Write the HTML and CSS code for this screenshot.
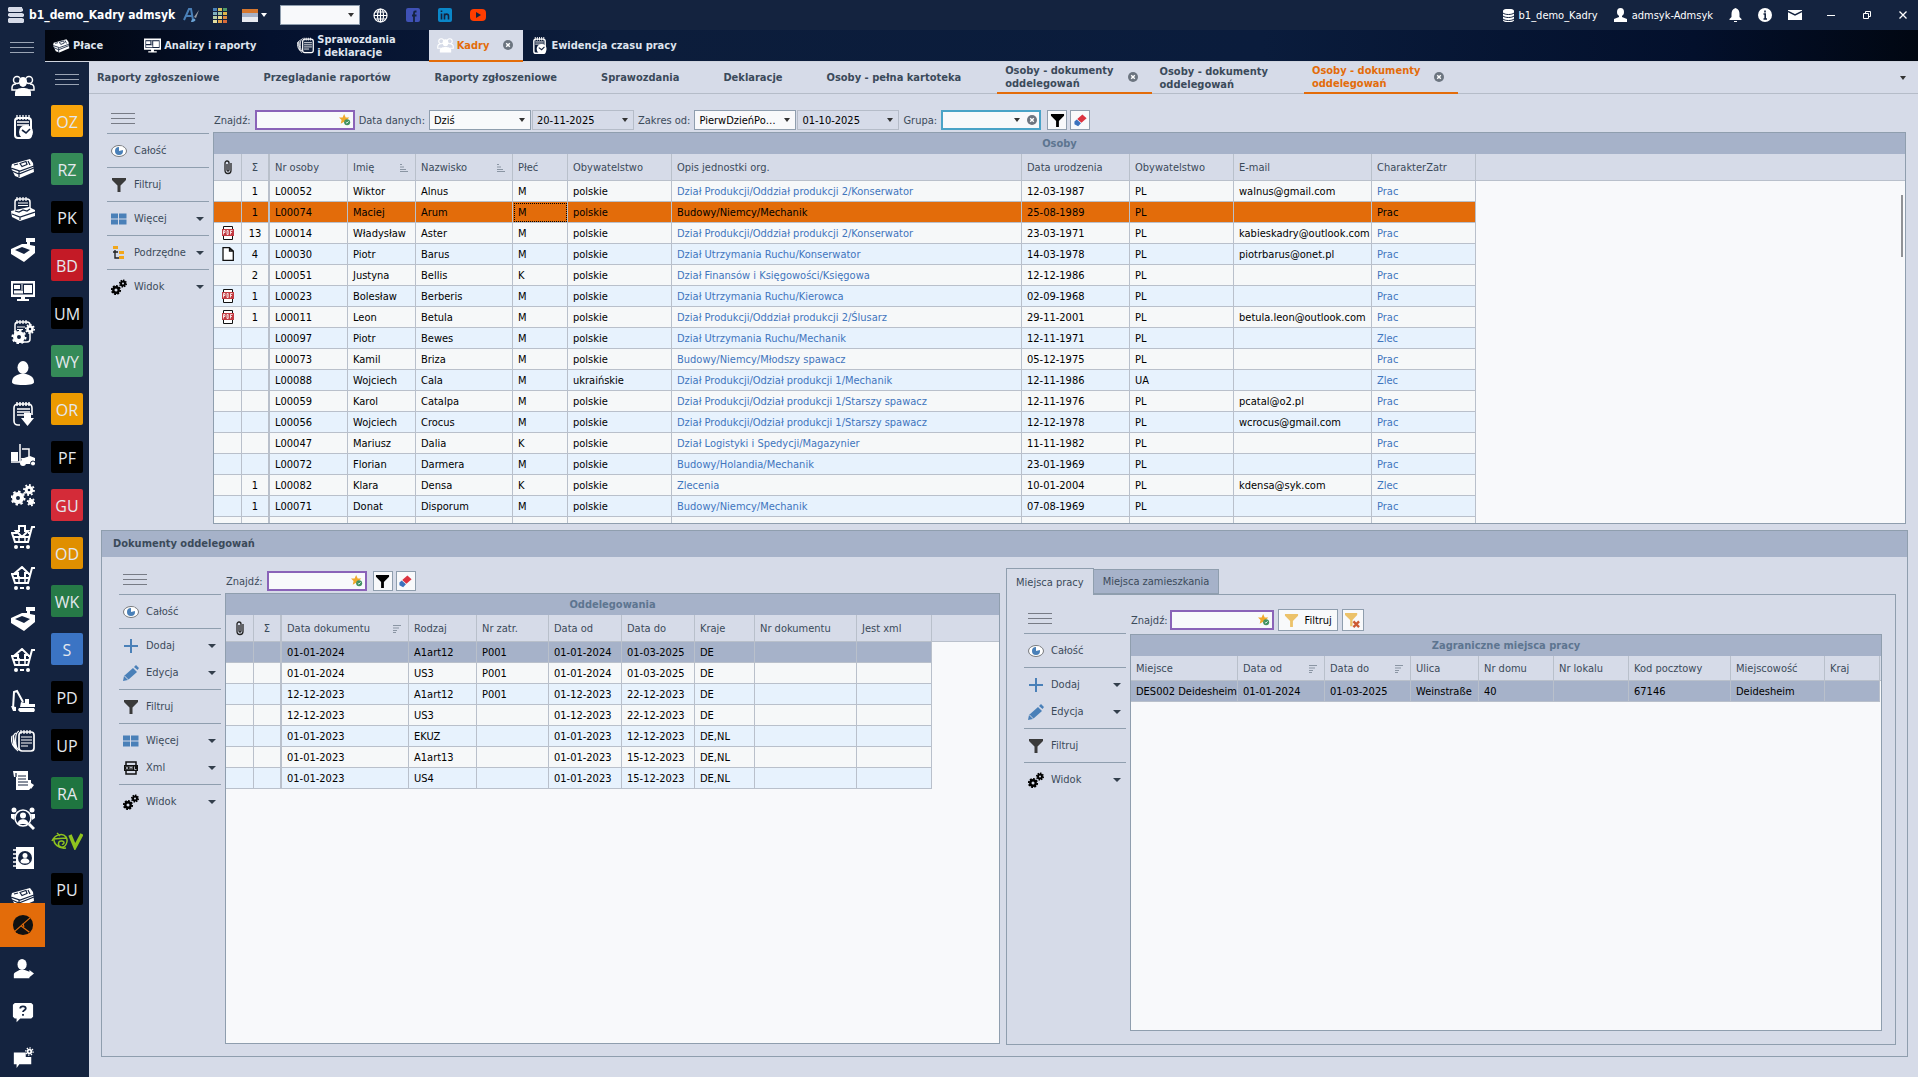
FILE: index.html
```
<!DOCTYPE html>
<html lang="pl">
<head>
	<meta charset="utf-8">
	<title>b1_demo_Kadry admsyk</title>
	<link rel="stylesheet" href="styles.css">
</head>
<body>

<!-- icons used more than once -->
<svg class="defs" width="0" height="0">
	<symbol id="i-money" viewBox="0 0 24 24"><path d="M1 8 19 3l3 4 1 9-14 6-5-2-4-8z" fill="#fff"/><path d="M3 9l4-1M9 7.500l2 3 5-2-1-3zM17 5l2 4M0 12l9 3 14-5M8 15v6M1 15l7 3 15-6" fill="none" stroke="#14233f" stroke-width="1.200"/></symbol>
	<symbol id="i-tray" viewBox="0 0 24 24"><path d="M15 0h9v4h-5v3l5 1v7L13 24 0 16v-5l11-5h5V4h-1z" fill="#fff"/><path d="M4 12l7-3 8 3-6 4z" fill="#14233f"/></symbol>
	<symbol id="i-cart-up" viewBox="0 0 24 24"><g fill="none" stroke="#fff" stroke-width="2"><path d="M24 2h-3l-4 15H4L1 8h5M17 8h3M3 12h16"/><path d="M7 12V7H4l7-6 6 6h-3v5z" fill="#14233f"/><path d="M8 10v6M14 10v6" stroke-width="1.500"/></g><g fill="#fff"><circle cx="5" cy="22" r="2"/><circle cx="17" cy="22" r="2"/><path d="M9 21h4v2H9z"/></g></symbol>
	<symbol id="i-eye" viewBox="0 0 16 16"><ellipse cx="8" cy="8" rx="7.500" ry="5.500" fill="#fff" stroke="#77797c"/><circle cx="8" cy="8" r="4" fill="#4a80b8"/><path d="M8 8V3.500h4V7z" fill="#fff"/></symbol>
	<symbol id="i-funnel" viewBox="0 0 16 16"><path d="M1 1h14v2l-5.500 5.500V15h-3V8.500L1 3z"/></symbol>
	<symbol id="i-more" viewBox="0 0 16 16"><path d="M0 2.500h7v5H0zM8 2.500h7.500v5H8zM0 8.500h7v5H0zM8 8.500h7.500v5H8z" fill="#4a80b8"/></symbol>
	<symbol id="i-tree" viewBox="0 0 16 16"><path d="M4 5v8h4M2 7h5" fill="none" stroke="#222" stroke-width="1.400"/><path d="M2 1h5v3H2zM8 6h5v3H8zM8 11h5v3H8z" fill="#f2a71b"/></symbol>
	<symbol id="i-cogs" viewBox="0 0 16 16"><g fill="none" stroke="#000"><circle cx="5" cy="11" r="2.700" stroke-width="2.400"/><circle cx="5" cy="11" r="4.200" stroke-width="1.800" pathLength="16" stroke-dasharray="1.200 .8"/><circle cx="12" cy="4.500" r="2" stroke-width="2"/><circle cx="12" cy="4.500" r="3.300" stroke-width="1.500" pathLength="16" stroke-dasharray="1.200 .8"/></g></symbol>
	<symbol id="i-plus" viewBox="0 0 16 16"><path d="M8 1v14M1 8h14" stroke="#4a80b8" stroke-width="2"/></symbol>
	<symbol id="i-pencil" viewBox="0 0 16 16"><path d="M0 16l1-5 9-8 4 4-9 8zM11 2l2-2 3 3-1.500 2z" fill="#4a80b8"/><path d="M1.500 11l4 4" stroke="#d6dbe8"/></symbol>
	<symbol id="i-xml" viewBox="0 0 16 16"><path d="M3 5V2h10v3M3 11v3h10v-3" fill="none" stroke="#111" stroke-width="1.500"/><path d="M1 5h14v6H1z" fill="#111"/><path d="M3 6.500l2 3M5 6.500l-2 3M7 9.500v-3l1 1.500 1-1.500v3M11.500 6.500v3h2" stroke="#cfd3dc" stroke-width=".8" fill="none"/></symbol>
	<symbol id="i-star" viewBox="0 0 14 14"><path d="M6 0l1.800 4H12L9 7l1 4.500L6 9l-4 2.500L3 7 0 4h4.200z" fill="#f0a92b"/><circle cx="9.500" cy="9.500" r="3.500" fill="#3f9160"/><path d="M8 9.500l1.200 1.200 2-2.200" fill="none" stroke="#fff"/></symbol>
	<symbol id="i-eraser" viewBox="0 0 16 16"><path d="M10 1.500l4.500 4-5.500 5-4.500-4z" fill="#dc3340"/><path d="M4 7l4.500 4L5.500 14 1.500 12V9z" fill="#3b72bd"/></symbol>
	<symbol id="i-clip" viewBox="0 0 12 16"><path d="M9 4v7.500a3 3 0 0 1-6 0V4a2 2 0 0 1 4 0v7a1 1 0 0 1-2 0V5" fill="none" stroke="#222" stroke-width="1.300"/></symbol>
	<symbol id="i-pdf" viewBox="0 0 14 16"><path d="M2.500 5V1.500h9V5M2.500 10v4.500h9V10" fill="#fff" stroke="#111"/><path d="M1 4h12v7H1z" fill="#c23a41"/><path d="M2.500 9.500v-4h1.500v2H2.500M6 5.500v4h1.200V5.500zM9.500 9.500v-4h2M9.500 7.500H11" fill="none" stroke="#fff" stroke-width=".8"/></symbol>
	<symbol id="i-doc" viewBox="0 0 14 16"><path d="M2 1.700h6.500L12.300 5v9.300H2zM8.500 1.700V5h3.800" fill="#fff" stroke="#111" stroke-width="1.300"/></symbol>
	<symbol id="i-asc" viewBox="0 0 8 8"><path d="M0 .5h2M0 3h4M0 5.500h6M0 7.500h8" stroke="#8a95a3"/></symbol>
	<symbol id="i-desc" viewBox="0 0 8 8"><path d="M0 .5h8M0 3h6M0 5.500h4M0 7.500h3" stroke="#8a95a3"/></symbol>
	<symbol id="i-close" viewBox="0 0 10 10"><circle cx="5" cy="5" r="5" fill="#6c7580"/><path d="M3.200 3.200l3.600 3.600M6.800 3.200L3.200 6.800" stroke="#fff" stroke-width="1.400"/></symbol>
	<symbol id="i-people" viewBox="0 0 24 24"><g fill="none" stroke="#fff" stroke-width="1.500"><circle cx="6" cy="6" r="3.500"/><circle cx="18" cy="6" r="3.500"/><path d="M6 16H1v-2c0-3 2-4 4-4M18 16h5v-2c0-3-2-4-4-4"/></g><ellipse cx="12" cy="8" rx="4" ry="5" fill="#fff"/><path d="M4 22v-3c0-4 4-5 8-5s8 1 8 5v3z" fill="#fff"/></symbol>
	<symbol id="i-screen" viewBox="0 0 24 24"><path d="M0 2h24v16H14v2h4v2H6v-2h4v-2H0z" fill="#fff"/><path d="M2 4.500h20v11H2z" fill="#14233f"/><path d="M3 6h6v4H3zM3 11.500h9v3H3zM13 6h8v8h-8z" fill="#fff"/><path d="M11 5v6" stroke="#fff"/></symbol>
	<symbol id="i-clock" viewBox="0 0 24 24"><rect x="4" y="3" width="16" height="20" rx="3" fill="none" stroke="#fff" stroke-width="2"/><path d="M6 0v5M9 0v5M12 0v5M15 0v5M18 0v5M6 7h12M6 10h12" stroke="#fff" stroke-width="1.300"/><circle cx="15" cy="17" r="7" fill="#fff"/><path d="M11 15l4 3 4-4" fill="none" stroke="#14233f" stroke-width="1.600"/></symbol>
	<symbol id="i-docs" viewBox="0 0 24 24"><rect x="8" y="3" width="15" height="19" rx="3" fill="#14233f" stroke="#fff" stroke-width="1.700"/><path d="M10 8h11M10 11h11M10 14h11M10 17h7M10 1v4M13 1v4M16 1v4M19 1v4M7 22C3 20 4 10 2 6M5 4C1 5 2 17 5 20M8 2C3 4 4 19 8 21M1 7c-1 4 0 9 3 12" fill="none" stroke="#fff" stroke-width="1.200"/></symbol>
	<symbol id="i-user" viewBox="0 0 24 24"><ellipse cx="12" cy="6.500" rx="5.500" ry="6.500" fill="#fff"/><path d="M1 21c0-5 4-7 8-8h6c4 1 8 3 8 8 0 2-3 3-11 3S1 23 1 21z" fill="#fff"/></symbol>
</svg>

<header class="titlebar">
	<svg width="16" height="16" viewBox="0 0 16 16"><path d="M1 0h13v1l1 1v2l-2 1H1L0 4V1zM1 6h13l2 1v2l-1 1H2L0 9V7zM1 11h13l2 1v3l-1 1H1l-1-1v-3z" fill="#d6dbe8"/></svg>
	<h1>b1_demo_Kadry admsyk</h1>
	<div class="tools">
		<button type="button" aria-label="Czcionka"><svg width="16" height="16" viewBox="0 0 16 16"><path d="M1 13L6 2h2l2 11M3 9h6" fill="none" stroke="#4a80b8" stroke-width="2"/><path d="M16 3l-3 8-2-1z" fill="#9a9da3"/><path d="M8 15c0-3 3-4 4-3s0 3-4 3z" fill="#6aa2d4"/></svg></button>
		<button type="button" aria-label="Kafelki"><svg width="15" height="15" viewBox="0 0 15 15"><path d="M0 0h4v3H0z" fill="#4a80b8"/><path d="M5 0h4v3H5z" fill="#d8c35a"/><path d="M10 0h4v3h-4z" fill="#4f9a6a"/><path d="M0 4h4v3H0z" fill="#7fb0bf"/><path d="M5 4h4v3H5z" fill="#9ec5a0"/><path d="M10 4h4v3h-4z" fill="#e0b64a"/><path d="M0 8h4v3H0z" fill="#b9cfa5"/><path d="M5 8h4v3H5z" fill="#e6d98f"/><path d="M10 8h4v3h-4z" fill="#dd8a3d"/><path d="M0 12h4v3H0z" fill="#e5dfa0"/><path d="M5 12h4v3H5z" fill="#e3a24a"/><path d="M10 12h4v3h-4z" fill="#d76a3a"/></svg></button>
		<button type="button" aria-label="Motyw" class="drop"><svg width="16" height="13" viewBox="0 0 16 13"><path d="M0 0h16v4H0z" fill="#d5772f"/><path d="M0 4h16v5H0z" fill="#a6b2c9"/><path d="M0 8h16v5H0z" fill="#e8ebf2"/></svg></button>
	</div>
	<span class="sel sel-title"><select aria-label="Szukaj w programie"><option></option></select></span>
	<div class="links">
		<a href="#" aria-label="Strona"><svg width="15" height="15" viewBox="0 0 15 15"><g fill="none" stroke="#fff" stroke-width="1.200"><circle cx="7.500" cy="7.500" r="6.500"/><ellipse cx="7.500" cy="7.500" rx="3" ry="6.500"/><path d="M1 7.500h13M2 4h11M2 11h11M7.500 1v13"/></g></svg></a>
		<a href="#" aria-label="Facebook"><svg width="14" height="14" viewBox="0 0 14 14"><rect width="14" height="14" rx="2" fill="#3f51b5"/><path d="M10.500 3.500H9.200C8.300 3.500 8 4 8 5v9M6 7.500h4.500" fill="none" stroke="#14233f" stroke-width="1.800"/></svg></a>
		<a href="#" aria-label="LinkedIn"><svg width="14" height="14" viewBox="0 0 14 14"><rect width="14" height="14" rx="2" fill="#0a87c9"/><path d="M3.500 5.500v6M3.500 2.500v1.600M6.500 11.500v-6M6.500 8c0-2.500 4-2.500 4 0v3.500" fill="none" stroke="#14233f" stroke-width="1.600"/></svg></a>
		<a href="#" aria-label="YouTube"><svg width="16" height="14" viewBox="0 0 16 14"><rect y="1" width="16" height="12" rx="4" fill="#ff3d00"/><path d="M6 4l5 3-5 3z" fill="#14233f"/></svg></a>
	</div>
	<div class="account">
		<span class="acc"><svg width="11" height="13" viewBox="0 0 11 13"><path d="M0 2c0-3 11-3 11 0v9c0 3-11 3-11 0z" fill="#fff"/><path d="M0 4c2 2 9 2 11 0M0 7c2 2 9 2 11 0M0 10c2 2 9 2 11 0" fill="none" stroke="#14233f"/></svg>b1_demo_Kadry</span>
		<span class="acc"><svg width="13" height="14" viewBox="0 0 13 14"><ellipse cx="6.500" cy="4" rx="3.500" ry="4" fill="#fff"/><path d="M5 7h3v2l5 2v3H0v-3l5-2z" fill="#fff"/></svg>admsyk-Admsyk</span>
		<button type="button" aria-label="Powiadomienia"><svg width="13" height="14" viewBox="0 0 13 14"><path d="M6.500 0c3 1 4 3 4 6v3l2 2v1H.5v-1l2-2V6c0-3 1-5 4-6zM5 13h3v1H5z" fill="#fff"/></svg></button>
		<button type="button" aria-label="Informacje"><svg width="14" height="14" viewBox="0 0 14 14"><circle cx="7" cy="7" r="7" fill="#fff"/><path d="M7 2.500v2M5.500 6h1.700v5M5.500 11h3.500" fill="none" stroke="#14233f" stroke-width="1.600"/></svg></button>
		<button type="button" aria-label="Poczta"><svg width="14" height="12" viewBox="0 0 14 12"><path d="M0 1h14v10H0z" fill="#fff"/><path d="M0 2.500l7 3.500 7-3.500" fill="none" stroke="#14233f" stroke-width="1.400"/></svg></button>
	</div>
	<div class="window">
		<button type="button" aria-label="Minimalizuj"><svg width="8" height="8" viewBox="0 0 8 8"><path d="M0 4.500h8" stroke="#fff"/></svg></button>
		<button type="button" aria-label="Przywróć"><svg width="8" height="8" viewBox="0 0 8 8"><path d="M.5 2.500h5v5h-5zM2.500 2.500v-2h5v5h-2" fill="none" stroke="#fff"/></svg></button>
		<button type="button" aria-label="Zamknij"><svg width="8" height="8" viewBox="0 0 8 8"><path d="M.5.5l7 7M7.500.5l-7 7" stroke="#fff" stroke-width="1.300"/></svg></button>
	</div>
</header>

<div class="app">
	<nav class="modules" aria-label="Moduły">
		<button type="button" class="burger light" aria-label="Menu"></button>
		<div class="modlist">
			<a href="#"><svg><use href="#i-people"/></svg></a>
			<a href="#"><svg><use href="#i-clock"/></svg></a>
			<a href="#"><svg><use href="#i-money"/></svg></a>
			<a href="#"><svg viewBox="0 0 24 24"><rect x="4" y="2" width="15" height="14" rx="3" fill="none" stroke="#fff" stroke-width="1.500"/><path d="M6 0v4M9 0v4M12 0v4M15 0v4M7 6h10M7 8.500h10" stroke="#fff" stroke-width="1.200"/><path d="M0 14l18-4 6 3v6L9 24l-8-4z" fill="#fff"/><path d="M4 14l4 1 4-2 4 1 3-2M1 17l8 3 15-5M9 20v3" fill="none" stroke="#14233f" stroke-width="1.200"/></svg></a>
			<a href="#"><svg><use href="#i-tray"/></svg></a>
			<a href="#"><svg><use href="#i-screen"/></svg></a>
			<a href="#"><svg viewBox="0 0 24 24"><rect x="4" y="2" width="15" height="20" rx="3" fill="none" stroke="#fff" stroke-width="1.500"/><path d="M6 0v4M9 0v4M12 0v4M15 0v4M6 7h8M6 9.500h6" stroke="#fff" stroke-width="1.200"/><g fill="#14233f" stroke="#fff"><circle cx="8" cy="17" r="4" stroke-width="4"/><circle cx="8" cy="17" r="6.500" fill="none" stroke-width="2" pathLength="16" stroke-dasharray="1 1"/><circle cx="19" cy="9" r="2.500" stroke-width="2.500"/><circle cx="19" cy="9" r="4.300" fill="none" stroke-width="1.500" pathLength="16" stroke-dasharray="1 1"/></g></svg></a>
			<a href="#"><svg><use href="#i-user"/></svg></a>
			<a href="#"><svg viewBox="0 0 24 24"><path d="M9 23H7c-2 0-4-1-4-4V6c0-2 1-4 4-4h10c3 0 4 2 4 4v7" fill="none" stroke="#fff" stroke-width="1.600"/><path d="M6 0v4M9 0v4M12 0v4M15 0v4M18 0v4M6 7h13M6 10h13M6 13h7" stroke="#fff" stroke-width="1.500"/><path d="M13 11h7v5h3l-6.500 8L10 16h3z" fill="#fff"/></svg></a>
			<a href="#"><svg viewBox="0 0 24 24"><path d="M0 9h7v9H0z" fill="#fff"/><path d="M9 1v18H0M11 6h7v8" fill="none" stroke="#fff" stroke-width="1.500"/><path d="M10 15h3l6-2 5 2v6H12z" fill="#fff"/><circle cx="12" cy="20" r="3" fill="#fff"/><circle cx="22" cy="20.500" r="2.500" fill="#fff" stroke="#14233f"/></svg></a>
			<a href="#"><svg viewBox="0 0 24 24"><g fill="none" stroke="#fff"><circle cx="7" cy="14" r="4" stroke-width="4"/><circle cx="7" cy="14" r="6.500" stroke-width="2" pathLength="16" stroke-dasharray="1 1"/><circle cx="18" cy="6" r="2.800" stroke-width="3"/><circle cx="18" cy="6" r="5" stroke-width="1.800" pathLength="16" stroke-dasharray="1 1"/><circle cx="20" cy="18" r="1.500" stroke-width="3"/><circle cx="20" cy="18" r="3.500" stroke-width="1.500" pathLength="12" stroke-dasharray="1 1"/></g></svg></a>
			<a href="#"><svg viewBox="0 0 24 24"><g fill="none" stroke="#fff" stroke-width="2"><path d="M24 2h-3l-4 15H4L1 8h5M17 8h3M3 12h16"/><path d="M8 1v5H5l6 6 6-6h-3V1z" fill="#14233f"/><path d="M8 12v4M14 12v4" stroke-width="1.500"/></g><g fill="#fff"><circle cx="5" cy="22" r="2"/><circle cx="17" cy="22" r="2"/><path d="M9 21h4v2H9z"/></g></svg></a>
			<a href="#"><svg><use href="#i-cart-up"/></svg></a>
			<a href="#"><svg><use href="#i-tray"/></svg></a>
			<a href="#"><svg><use href="#i-cart-up"/></svg></a>
			<a href="#"><svg viewBox="0 0 24 24"><path d="M2 20L3 3l3-1 6 11" fill="none" stroke="#fff" stroke-width="2"/><path d="M0 17l5 1v4H2zM10 13l4 1v-4h4v5h6v3H9zM8 19h15l1 2-1 2H9l-2-2z" fill="#fff"/></svg></a>
			<a href="#"><svg><use href="#i-docs"/></svg></a>
			<a href="#"><svg viewBox="0 0 24 24"><path d="M2 3h15v9h3v8l-2 2H5V9H3zM20 15l3 2-3 4z" fill="#fff"/><path d="M7 8h8M7 11h8M7 14h10M7 17h10M5 5v4" stroke="#14233f" stroke-width="1.200"/></svg></a>
			<a href="#"><svg viewBox="0 0 24 24"><g fill="#fff"><circle cx="3" cy="3" r="2.500"/><circle cx="21" cy="3" r="2.500"/><path d="M0 7h4l-1 6-3-2zM24 7h-4l1 6 3-2z"/></g><circle cx="12" cy="11" r="8" fill="none" stroke="#fff" stroke-width="1.600"/><circle cx="12" cy="8.500" r="3" fill="#fff"/><path d="M7 16c0-5 10-5 10 0v1H7z" fill="#fff"/><path d="M18 17l5 5" stroke="#fff" stroke-width="3"/></svg></a>
			<a href="#"><svg viewBox="0 0 24 24"><path d="M5 1h18v22H5z" fill="#fff"/><path d="M2 4h4M2 8h4M2 12h4M2 16h4M2 20h4" stroke="#fff" stroke-width="1.500"/><circle cx="14" cy="12" r="7" fill="#14233f"/><circle cx="14" cy="9.500" r="2.500" fill="#fff"/><path d="M9.500 16c0-5 9-5 9 0-2 2-7 2-9 0z" fill="#fff"/></svg></a>
			<a href="#"><svg><use href="#i-money"/></svg></a>
		</div>
		<div class="modbottom">
			<a href="#" class="on"><svg viewBox="0 0 24 24"><circle cx="12" cy="12" r="11" fill="#111"/><path d="M3 19L20 4M10 13l9 7M12 10l1 4" fill="none" stroke="#e36c0a" stroke-width="1.300"/></svg></a>
			<a href="#"><svg viewBox="0 0 24 24"><ellipse cx="11" cy="7" rx="5" ry="6" fill="#fff"/><path d="M2 22v-4c0-3 4-3 6-5h6l5 2v-2l5 4-5 4v1z" fill="#fff"/></svg></a>
			<a href="#"><svg viewBox="0 0 24 24"><path d="M3 1h18l2 2v13l-2 2H9l-4 4v-4H3l-2-2V3z" fill="#fff"/><path d="M9 7c0-3 6-3 6 0 0 2-3 2-3 4M12 13v2" fill="none" stroke="#14233f" stroke-width="2"/></svg></a>
			<a href="#"><svg viewBox="0 0 24 24"><path d="M2 7h13v5h6v8H8l-3 4v-4H2z" fill="#fff"/><circle cx="19" cy="6" r="2" fill="none" stroke="#fff" stroke-width="2"/><circle cx="19" cy="6" r="4" fill="none" stroke="#fff" stroke-width="1.500" pathLength="16" stroke-dasharray="1 1"/></svg></a>
		</div>
	</nav>

	<div class="work">
		<nav class="maintabs" aria-label="Zakładki główne">
			<a href="#"><svg><use href="#i-money"/></svg>Płace</a>
			<a href="#"><svg><use href="#i-screen"/></svg>Analizy i raporty</a>
			<a href="#"><svg><use href="#i-docs"/></svg>Sprawozdania<br>i deklaracje</a>
			<a href="#" class="on"><svg><use href="#i-people"/></svg>Kadry<svg class="x"><use href="#i-close"/></svg></a>
			<a href="#"><svg><use href="#i-clock"/></svg>Ewidencja czasu pracy</a>
		</nav>

		<div class="below">
			<nav class="groups" aria-label="Grupy">
				<button type="button" class="burger light" aria-label="Menu grup"></button>
				<a href="#" class="g-amber">OZ</a>
				<a href="#" class="g-green">RZ</a>
				<a href="#">PK</a>
				<a href="#" class="g-red">BD</a>
				<a href="#">UM</a>
				<a href="#" class="g-green">WY</a>
				<a href="#" class="g-orange">OR</a>
				<a href="#">PF</a>
				<a href="#" class="g-rose">GU</a>
				<a href="#" class="g-ochre">OD</a>
				<a href="#" class="g-leaf">WK</a>
				<a href="#" class="g-blue">S</a>
				<a href="#">PD</a>
				<a href="#">UP</a>
				<a href="#" class="g-dark">RA</a>
				<a href="#" class="g-logo" aria-label="eV"><svg width="32" height="18" viewBox="0 0 32 18"><g fill="none" stroke="#8fc31f"><path d="M1 9C4 2 12 1 15 5c3 5-1 11-5 10S7 8 11 9s1 4 0 3M3 6c-1 6 5 11 12 10M6 1l3 3M2 7l13-1" stroke-width="1.500"/><path d="M19 3l5 12 7-13" stroke-width="3.500"/></g></svg></a>
				<a href="#">PU</a>
			</nav>

			<div class="page">
				<nav class="subtabs" aria-label="Widoki">
					<a href="#">Raporty zgłoszeniowe</a>
					<a href="#">Przeglądanie raportów</a>
					<a href="#">Raporty zgłoszeniowe</a>
					<a href="#">Sprawozdania</a>
					<a href="#">Deklaracje</a>
					<a href="#">Osoby - pełna kartoteka</a>
					<a href="#" class="open">Osoby - dokumenty<br>oddelegowań<svg class="x"><use href="#i-close"/></svg></a>
					<a href="#">Osoby - dokumenty<br>oddelegowań</a>
					<a href="#" class="open on">Osoby - dokumenty<br>oddelegowań<svg class="x"><use href="#i-close"/></svg></a>
				</nav>

				<main class="content">
					<!-- OSOBY -->
					<section class="view">
						<aside class="menu">
							<button type="button" class="burger" aria-label="Zwiń menu"></button>
							<div><button type="button"><svg><use href="#i-eye"/></svg>Całość</button></div>
							<div><button type="button"><svg fill="#3a3a3a"><use href="#i-funnel"/></svg>Filtruj</button></div>
							<div><button type="button" class="drop"><svg><use href="#i-more"/></svg>Więcej</button></div>
							<div><button type="button" class="drop"><svg><use href="#i-tree"/></svg>Podrzędne</button></div>
							<div><button type="button" class="drop"><svg><use href="#i-cogs"/></svg>Widok</button></div>
						</aside>
						<div class="list">
							<form class="filters">
								<label for="f1">Znajdź:</label>
								<span class="find"><input type="text" id="f1"><svg><use href="#i-star"/></svg></span>
								<label for="f2">Data danych:</label>
								<span class="sel"><select id="f2"><option>Dziś</option></select></span>
								<span class="sel flat"><input type="text" aria-label="Data danych" value="20-11-2025" readonly></span>
								<label for="f3">Zakres od:</label>
								<span class="sel"><select id="f3"><option>PierwDzieńPo…</option></select></span>
								<span class="sel flat"><input type="text" aria-label="Zakres od" value="01-10-2025" readonly></span>
								<label for="f4">Grupa:</label>
								<span class="sel group"><select id="f4"><option></option></select><svg class="x"><use href="#i-close"/></svg></span>
								<button type="button" class="sq" aria-label="Filtruj"><svg><use href="#i-funnel"/></svg></button>
								<button type="button" class="sq" aria-label="Wyczyść"><svg><use href="#i-eraser"/></svg></button>
							</form>
							<div class="grid">
								<h2>Osoby</h2>
								<div class="rows">
								<table class="osoby">
									<thead>
										<tr><th><svg class="ic"><use href="#i-clip"/></svg></th><th>Σ</th><th>Nr osoby</th><th>Imię<svg class="sort"><use href="#i-asc"/></svg></th><th>Nazwisko<svg class="sort"><use href="#i-asc"/></svg></th><th>Płeć</th><th>Obywatelstwo</th><th>Opis jednostki org.</th><th>Data urodzenia</th><th>Obywatelstwo</th><th>E-mail</th><th>CharakterZatr</th><th></th></tr>
									</thead>
									<tbody>
										<tr><td></td><td>1</td><td>L00052</td><td>Wiktor</td><td>Alnus</td><td>M</td><td>polskie</td><td><a href="#">Dział Produkcji/Oddział produkcji 2/Konserwator</a></td><td>12-03-1987</td><td>PL</td><td>walnus@gmail.com</td><td><a href="#">Prac</a></td><td></td></tr>
										<tr class="picked"><td></td><td>1</td><td>L00074</td><td>Maciej</td><td>Arum</td><td class="cur">M</td><td>polskie</td><td><a href="#">Budowy/Niemcy/Mechanik</a></td><td>25-08-1989</td><td>PL</td><td></td><td><a href="#">Prac</a></td><td></td></tr>
										<tr><td><svg class="ic"><use href="#i-pdf"/></svg></td><td>13</td><td>L00014</td><td>Władysław</td><td>Aster</td><td>M</td><td>polskie</td><td><a href="#">Dział Produkcji/Oddział produkcji 2/Konserwator</a></td><td>23-03-1971</td><td>PL</td><td>kabieskadry@outlook.com</td><td><a href="#">Prac</a></td><td></td></tr>
										<tr><td><svg class="ic"><use href="#i-doc"/></svg></td><td>4</td><td>L00030</td><td>Piotr</td><td>Barus</td><td>M</td><td>polskie</td><td><a href="#">Dział Utrzymania Ruchu/Konserwator</a></td><td>14-03-1978</td><td>PL</td><td>piotrbarus@onet.pl</td><td><a href="#">Prac</a></td><td></td></tr>
										<tr><td></td><td>2</td><td>L00051</td><td>Justyna</td><td>Bellis</td><td>K</td><td>polskie</td><td><a href="#">Dział Finansów i Księgowości/Księgowa</a></td><td>12-12-1986</td><td>PL</td><td></td><td><a href="#">Prac</a></td><td></td></tr>
										<tr><td><svg class="ic"><use href="#i-pdf"/></svg></td><td>1</td><td>L00023</td><td>Bolesław</td><td>Berberis</td><td>M</td><td>polskie</td><td><a href="#">Dział Utrzymania Ruchu/Kierowca</a></td><td>02-09-1968</td><td>PL</td><td></td><td><a href="#">Prac</a></td><td></td></tr>
										<tr><td><svg class="ic"><use href="#i-pdf"/></svg></td><td>1</td><td>L00011</td><td>Leon</td><td>Betula</td><td>M</td><td>polskie</td><td><a href="#">Dział Produkcji/Oddział produkcji 2/Ślusarz</a></td><td>29-11-2001</td><td>PL</td><td>betula.leon@outlook.com</td><td><a href="#">Prac</a></td><td></td></tr>
										<tr><td></td><td></td><td>L00097</td><td>Piotr</td><td>Bewes</td><td>M</td><td>polskie</td><td><a href="#">Dział Utrzymania Ruchu/Mechanik</a></td><td>12-11-1971</td><td>PL</td><td></td><td><a href="#">Zlec</a></td><td></td></tr>
										<tr><td></td><td></td><td>L00073</td><td>Kamil</td><td>Briza</td><td>M</td><td>polskie</td><td><a href="#">Budowy/Niemcy/Młodszy spawacz</a></td><td>05-12-1975</td><td>PL</td><td></td><td><a href="#">Prac</a></td><td></td></tr>
										<tr><td></td><td></td><td>L00088</td><td>Wojciech</td><td>Cala</td><td>M</td><td>ukraińskie</td><td><a href="#">Dział Produkcji/Odział produkcji 1/Mechanik</a></td><td>12-11-1986</td><td>UA</td><td></td><td><a href="#">Zlec</a></td><td></td></tr>
										<tr><td></td><td></td><td>L00059</td><td>Karol</td><td>Catalpa</td><td>M</td><td>polskie</td><td><a href="#">Dział Produkcji/Odział produkcji 1/Starszy spawacz</a></td><td>12-11-1976</td><td>PL</td><td>pcatal@o2.pl</td><td><a href="#">Prac</a></td><td></td></tr>
										<tr><td></td><td></td><td>L00056</td><td>Wojciech</td><td>Crocus</td><td>M</td><td>polskie</td><td><a href="#">Dział Produkcji/Odział produkcji 1/Starszy spawacz</a></td><td>12-12-1978</td><td>PL</td><td>wcrocus@gmail.com</td><td><a href="#">Prac</a></td><td></td></tr>
										<tr><td></td><td></td><td>L00047</td><td>Mariusz</td><td>Dalia</td><td>K</td><td>polskie</td><td><a href="#">Dział Logistyki i Spedycji/Magazynier</a></td><td>11-11-1982</td><td>PL</td><td></td><td><a href="#">Prac</a></td><td></td></tr>
										<tr><td></td><td></td><td>L00072</td><td>Florian</td><td>Darmera</td><td>M</td><td>polskie</td><td><a href="#">Budowy/Holandia/Mechanik</a></td><td>23-01-1969</td><td>PL</td><td></td><td><a href="#">Prac</a></td><td></td></tr>
										<tr><td></td><td>1</td><td>L00082</td><td>Klara</td><td>Densa</td><td>K</td><td>polskie</td><td><a href="#">Zlecenia</a></td><td>10-01-2004</td><td>PL</td><td>kdensa@syk.com</td><td><a href="#">Zlec</a></td><td></td></tr>
										<tr><td></td><td>1</td><td>L00071</td><td>Donat</td><td>Disporum</td><td>M</td><td>polskie</td><td><a href="#">Budowy/Niemcy/Mechanik</a></td><td>07-08-1969</td><td>PL</td><td></td><td><a href="#">Prac</a></td><td></td></tr>
										<tr><td></td><td></td><td></td><td></td><td></td><td></td><td></td><td></td><td></td><td></td><td></td><td></td><td></td></tr>
									</tbody>
								</table>
								<span class="thumb"></span>
								</div>
							</div>
						</div>
					</section>

					<!-- DOKUMENTY ODDELEGOWAŃ -->
					<section class="panel">
						<h2>Dokumenty oddelegowań</h2>
						<div class="split">
							<div class="view docs">
								<aside class="menu">
									<button type="button" class="burger" aria-label="Zwiń menu"></button>
									<div><button type="button"><svg><use href="#i-eye"/></svg>Całość</button></div>
									<div><button type="button" class="drop"><svg><use href="#i-plus"/></svg>Dodaj</button><button type="button" class="drop"><svg><use href="#i-pencil"/></svg>Edycja</button></div>
									<div><button type="button"><svg fill="#3a3a3a"><use href="#i-funnel"/></svg>Filtruj</button></div>
									<div><button type="button" class="drop"><svg><use href="#i-more"/></svg>Więcej</button><button type="button" class="drop"><svg><use href="#i-xml"/></svg>Xml</button></div>
									<div><button type="button" class="drop"><svg><use href="#i-cogs"/></svg>Widok</button></div>
								</aside>
								<div class="list">
									<form class="filters">
										<label for="f5">Znajdź:</label>
										<span class="find"><input type="text" id="f5"><svg><use href="#i-star"/></svg></span>
										<button type="button" class="sq" aria-label="Filtruj"><svg><use href="#i-funnel"/></svg></button>
										<button type="button" class="sq" aria-label="Wyczyść"><svg><use href="#i-eraser"/></svg></button>
									</form>
									<div class="grid">
										<h2>Oddelegowania</h2>
										<div class="rows">
										<table class="oddel">
											<thead>
												<tr><th><svg class="ic"><use href="#i-clip"/></svg></th><th>Σ</th><th>Data dokumentu<svg class="sort"><use href="#i-desc"/></svg></th><th>Rodzaj</th><th>Nr zatr.</th><th>Data od</th><th>Data do</th><th>Kraje</th><th>Nr dokumentu</th><th>Jest xml</th><th></th></tr>
											</thead>
											<tbody>
												<tr class="chosen"><td></td><td></td><td>01-01-2024</td><td>A1art12</td><td>P001</td><td>01-01-2024</td><td>01-03-2025</td><td>DE</td><td></td><td></td><td></td></tr>
												<tr><td></td><td></td><td>01-01-2024</td><td>US3</td><td>P001</td><td>01-01-2024</td><td>01-03-2025</td><td>DE</td><td></td><td></td><td></td></tr>
												<tr><td></td><td></td><td>12-12-2023</td><td>A1art12</td><td>P001</td><td>01-12-2023</td><td>22-12-2023</td><td>DE</td><td></td><td></td><td></td></tr>
												<tr><td></td><td></td><td>12-12-2023</td><td>US3</td><td></td><td>01-12-2023</td><td>22-12-2023</td><td>DE</td><td></td><td></td><td></td></tr>
												<tr><td></td><td></td><td>01-01-2023</td><td>EKUZ</td><td></td><td>01-01-2023</td><td>12-12-2023</td><td>DE,NL</td><td></td><td></td><td></td></tr>
												<tr><td></td><td></td><td>01-01-2023</td><td>A1art13</td><td></td><td>01-01-2023</td><td>15-12-2023</td><td>DE,NL</td><td></td><td></td><td></td></tr>
												<tr><td></td><td></td><td>01-01-2023</td><td>US4</td><td></td><td>01-01-2023</td><td>15-12-2023</td><td>DE,NL</td><td></td><td></td><td></td></tr>
											</tbody>
										</table>
										</div>
									</div>
								</div>
							</div>

							<div class="places">
								<div class="tabs">
									<button type="button" class="on">Miejsca pracy</button>
									<button type="button">Miejsca zamieszkania</button>
								</div>
								<div class="view box">
									<aside class="menu">
										<button type="button" class="burger" aria-label="Zwiń menu"></button>
										<div><button type="button"><svg><use href="#i-eye"/></svg>Całość</button></div>
										<div><button type="button" class="drop"><svg><use href="#i-plus"/></svg>Dodaj</button><button type="button" class="drop"><svg><use href="#i-pencil"/></svg>Edycja</button></div>
										<div><button type="button"><svg fill="#3a3a3a"><use href="#i-funnel"/></svg>Filtruj</button></div>
										<div><button type="button" class="drop"><svg><use href="#i-cogs"/></svg>Widok</button></div>
									</aside>
									<div class="list">
										<form class="filters">
											<label for="f6">Znajdź:</label>
											<span class="find"><input type="text" id="f6"><svg><use href="#i-star"/></svg></span>
											<button type="button" class="wide"><svg fill="#ecc26a"><use href="#i-funnel"/></svg>Filtruj</button>
											<button type="button" class="sq" aria-label="Usuń filtr"><svg viewBox="0 0 16 16"><path d="M0 0h13v2L8 7.500V14H5.500V7.500L0 2z" fill="#ecc26a"/><path d="M9 9l6 6M15 9l-6 6" stroke="#cc5a33" stroke-width="2.500"/></svg></button>
										</form>
										<div class="grid">
											<h2>Zagraniczne miejsca pracy</h2>
											<div class="rows">
											<table class="miejsca">
												<thead>
													<tr><th>Miejsce</th><th>Data od<svg class="sort"><use href="#i-desc"/></svg></th><th>Data do<svg class="sort"><use href="#i-desc"/></svg></th><th>Ulica</th><th>Nr domu</th><th>Nr lokalu</th><th>Kod pocztowy</th><th>Miejscowość</th><th>Kraj</th><th></th></tr>
												</thead>
												<tbody>
													<tr class="chosen"><td>DES002 Deidesheim</td><td>01-01-2024</td><td>01-03-2025</td><td>Weinstraße</td><td>40</td><td></td><td>67146</td><td>Deidesheim</td><td></td><td></td></tr>
												</tbody>
											</table>
											</div>
										</div>
									</div>
								</div>
							</div>
						</div>
					</section>
				</main>
			</div>
		</div>
	</div>
</div>
</body>
</html>
```
FILE: styles.css
```
* { box-sizing: border-box; }

body {
	margin: 0;
	height: 100vh;
	display: flex;
	flex-direction: column;
	overflow: hidden;
	background: #14233f;
	color: #3b4a5a;
	font: 11px/13px "DejaVu Sans Condensed", Tahoma, sans-serif;
}
a { color: inherit; text-decoration: none; }
button {
	margin: 0;
	padding: 0;
	border: 0;
	background: none;
	color: inherit;
	font: inherit;
}
input, select { font: inherit; color: #000; border-radius: 0; }
h1, h2 { margin: 0; font-size: 11px; }
svg { display: block; flex: none; }
.defs { position: absolute; }

/* ---- title bar ---- */
.titlebar {
	height: 30px;
	padding-left: 8px;
	display: flex;
	align-items: center;
	color: #fff;
}
.titlebar h1 { font-size: 12px; margin-left: 5px; }
.tools { display: flex; align-items: center; gap: 14px; margin: 0 13px 0 8px; }
.links { display: flex; align-items: center; gap: 18px; margin-left: 13px; }
.account { display: flex; align-items: center; gap: 16px; margin-left: auto; }
.acc { display: flex; align-items: center; gap: 5px; }
.window { display: flex; gap: 28px; margin: 0 11px 0 25px; }
.tools .drop { display: flex; align-items: center; gap: 3px; }
.tools .drop::after {
	content: "";
	border: 3px solid transparent;
	border-top: 4px solid #fff;
	border-bottom: 0;
}

/* ---- module bar ---- */
.app { flex: 1; min-height: 0; display: flex; }
.modules { width: 45px; flex: none; display: flex; flex-direction: column; }
.burger {
	display: block;
	width: 24px;
	height: 11px;
	border-top: 1px solid #777b85;
	border-bottom: 1px solid #777b85;
	background: linear-gradient(#777b85, #777b85) 0 4px / 100% 1px no-repeat;
}
.burger.light { border-color: #9aa4b4; background-image: linear-gradient(#9aa4b4, #9aa4b4); }
.modules .burger { margin: 12px 0 12px 10px; flex: none; }
.modlist { flex: 1; min-height: 0; overflow: hidden; }
.modlist a, .modbottom a { display: flex; align-items: center; justify-content: center; }
.modlist a { height: 41px; }
.modlist a:nth-child(n+17) { height: 39px; }
.modlist svg { width: 24px; height: 24px; }
.modbottom { margin-bottom: -2px; }
.modbottom a { height: 44px; }
.modbottom svg { width: 22px; height: 22px; }
.modbottom .on { background: #e36c0a; }

.work { flex: 1; min-width: 0; display: flex; flex-direction: column; }
.maintabs {
	height: 32px;
	display: flex;
	border-bottom: 1px solid #cfd4de;
	background: linear-gradient(90deg, #02060f 0, #04112e 12%, #0c1d3b 30%, #0a1c3c 65%, #03102c 88%, #010712);
	color: #dfe4ee;
	font-weight: bold;
}
.maintabs a { display: flex; align-items: center; padding: 0 33px 0 8px; }
.maintabs svg { width: 17px; height: 17px; margin-right: 3px; }
.maintabs .on {
	padding-right: 10px;
	margin-bottom: -1px;
	background: #d6dbe8;
	border-bottom: 2px solid #e36c0a;
	color: #e36c0a;
}
.maintabs .x, .subtabs .x { width: 10px; height: 10px; margin: 0 0 0 14px; }

/* ---- groups ---- */
.below { flex: 1; min-height: 0; display: flex; }
.groups {
	width: 44px;
	flex: none;
	padding: 12px 0 0 6px;
	display: flex;
	flex-direction: column;
	gap: 16px;
}
.groups .burger { margin: 0 0 4px 4px; }
.groups a {
	width: 32px;
	height: 32px;
	border-radius: 2px;
	background: #000;
	color: #e4e8ee;
	font: 16px/34px "Open Sans", sans-serif;
	text-align: center;
}
.groups .g-amber { background: #f9a50b; }
.groups .g-green { background: #358b58; }
.groups .g-red { background: #c41a26; }
.groups .g-orange { background: #ec9a00; }
.groups .g-rose { background: #d42b38; }
.groups .g-ochre { background: #e08f00; }
.groups .g-leaf { background: #267a47; }
.groups .g-blue { background: #3b74c4; }
.groups .g-dark { background: #1f7540; }
.groups .g-logo { background: none; padding-top: 7px; }

/* ---- page ---- */
.page { flex: 1; min-width: 0; display: flex; flex-direction: column; background: #d6dbe8; }
.subtabs {
	height: 32px;
	display: flex;
	align-items: stretch;
	border-bottom: 1px solid #b5bcc8;
	font-weight: bold;
}
.subtabs::after {
	content: "";
	align-self: center;
	margin: 0 12px 0 auto;
	border: 3px solid transparent;
	border-top: 4px solid #333;
	border-bottom: 0;
}
.subtabs a { display: flex; align-items: center; padding: 0 36px 0 8px; }
.subtabs .open { padding-right: 14px; margin-bottom: -1px; border-bottom: 2px solid #e36c0a; }
.subtabs .on { color: #e36c0a; }

.content {
	flex: 1;
	min-height: 0;
	display: grid;
	grid-template-rows: minmax(0, 430fr) minmax(0, 527fr);
	gap: 6px;
	padding: 0 10px 20px 12px;
}
.view { display: flex; gap: 4px; min-width: 0; min-height: 0; padding: 16px 2px 0 6px; }
.list { flex: 1; min-width: 0; display: flex; flex-direction: column; gap: 2px; }

/* ---- left menu ---- */
.menu { width: 102px; flex: none; }
.menu .burger { margin: 3px 0 9px 4px; }
.menu div { border-top: 1px solid #8f9eae; padding: 3px 0; }
.menu div button {
	width: 100%;
	height: 27px;
	padding: 0 5px 0 4px;
	display: flex;
	align-items: center;
	text-align: left;
}
.menu svg { width: 16px; height: 16px; margin-right: 7px; }
.menu .drop::after {
	content: "";
	margin-left: auto;
	border: 4px solid transparent;
	border-top: 4px solid #333f4c;
	border-bottom: 0;
}

/* ---- filter row ---- */
.filters { display: flex; align-items: center; height: 20px; gap: 1px; }
.filters label { padding: 0 3px 0 1px; }
.find { display: flex; width: 100px; height: 20px; border: 2px solid #8a63b8; background: #f8f9fb; align-items: center; margin-right: 2px; }
.find input { flex: 1; min-width: 0; border: 0; padding: 0 4px; background: none; }
.find svg { width: 12px; height: 12px; margin-right: 2px; }
.sel { display: flex; align-items: center; width: 102px; height: 20px; border: 1px solid #8f9eae; background: #f8f9fb; }
.sel select, .sel input {
	flex: 1;
	min-width: 0;
	height: 100%;
	padding: 0 0 0 4px;
	border: 0;
	background: none;
	appearance: none;
}
.sel::after {
	content: "";
	margin: 0 5px;
	border: 3px solid transparent;
	border-top: 4px solid #333;
	border-bottom: 0;
}
.sel.flat { border-color: #b5bcc8; background: none; margin-right: 2px; }
.sel-title { width: 80px; }
.sel.group { width: 100px; border: 2px solid #4aa3c7; margin-right: 5px; }
.sel.group::after { margin: 0 7px; }
.sel.group .x { order: 2; width: 10px; height: 10px; margin-right: 2px; }
.sq, .wide {
	display: flex;
	align-items: center;
	justify-content: center;
	width: 20px;
	height: 20px;
	margin-right: 2px;
	border: 1px solid #8f9eae;
	background: #f8f9fb;
}
.find + .sq { margin-left: 3px; }
.sq svg, .wide svg { width: 15px; height: 15px; }
.wide { width: 60px; color: #000; gap: 6px; }

/* ---- grids ---- */
.grid { flex: 1; min-height: 0; display: flex; flex-direction: column; border: 1px solid #8f9eae; background: #f8f9fb; }
.grid h2 { height: 21px; flex: none; line-height: 21px; text-align: center; background: #a6b2c9; color: #5d7590; }
.rows { position: relative; flex: 1; min-height: 0; overflow: hidden; }
.thumb { position: absolute; right: 2px; top: 41px; width: 2px; height: 62px; background: #909296; }
table { width: 100%; table-layout: fixed; border-collapse: separate; border-spacing: 0; }
th, td {
	padding: 0 5px;
	border-right: 1px solid #b9c0cb;
	border-bottom: 1px solid #b9c0cb;
	text-align: left;
	white-space: nowrap;
	overflow: hidden;
}
th { height: 27px; background: #d6dbe8; font-weight: normal; }
td { height: 21px; color: #000; }
td a { color: #3f75bd; }
tbody tr { background: #f6f8f9; }
th:last-child { border-right: 0; }
td:last-child { border: 0; background: #f8f9fb; }
.sort { float: right; width: 8px; height: 8px; margin: 3px 2px 0 0; }
.ic { width: 14px; height: 16px; margin: 0 auto; }

.osoby th:nth-child(-n+2), .osoby td:nth-child(-n+2),
.oddel th:nth-child(-n+2), .oddel td:nth-child(-n+2) { width: 28px; padding: 0 2px; text-align: center; }
.osoby th:nth-child(2), .osoby td:nth-child(2),
.oddel th:nth-child(2), .oddel td:nth-child(2) { border-right-width: 2px; }

.osoby th:nth-child(3) { width: 78px; }
.osoby th:nth-child(4) { width: 68px; }
.osoby th:nth-child(5) { width: 97px; }
.osoby th:nth-child(6) { width: 55px; }
.osoby th:nth-child(7) { width: 104px; }
.osoby th:nth-child(8) { width: 350px; }
.osoby th:nth-child(9) { width: 108px; }
.osoby th:nth-child(10) { width: 104px; }
.osoby th:nth-child(11) { width: 138px; }
.osoby th:nth-child(12) { width: 104px; }

.oddel th:nth-child(3) { width: 127px; }
.oddel th:nth-child(4) { width: 68px; }
.oddel th:nth-child(5) { width: 72px; }
.oddel th:nth-child(6), .oddel th:nth-child(7) { width: 73px; }
.oddel th:nth-child(8) { width: 60px; }
.oddel th:nth-child(9) { width: 102px; }
.oddel th:nth-child(10) { width: 75px; }

.miejsca th { height: 25px; }
.miejsca th:nth-child(1) { width: 107px; }
.miejsca th:nth-child(2) { width: 87px; }
.miejsca th:nth-child(3) { width: 86px; }
.miejsca th:nth-child(4) { width: 68px; }
.miejsca th:nth-child(5), .miejsca th:nth-child(6) { width: 75px; }
.miejsca th:nth-child(7) { width: 102px; }
.miejsca th:nth-child(8) { width: 94px; }
.miejsca th:nth-child(9) { width: 55px; }

.osoby tbody tr:nth-child(even), .oddel tbody tr:nth-child(odd) { background: #e7f2fd; }
.osoby tbody tr.picked { background: #e36c0a; }
table tbody tr.chosen, .oddel tbody tr.chosen { background: #a6b2c9; }
.picked a { color: #000; }
.picked .cur { outline: 1px dotted #000; outline-offset: -2px; }

/* ---- lower panel ---- */
.panel { display: flex; flex-direction: column; min-height: 0; border: 1px solid #8f9eae; }
.panel > h2 { height: 26px; flex: none; padding-left: 11px; line-height: 26px; background: #a6b2c9; }
.split { flex: 1; min-height: 0; display: flex; gap: 6px; padding: 0 11px 12px 17px; }
.docs { flex: 881; padding: 14px 0 0; }
.places { flex: 890; min-width: 0; display: flex; flex-direction: column; padding-top: 11px; }
.tabs { display: flex; align-items: flex-end; }
.tabs button { height: 25px; padding: 0 9px; border: 1px solid #8f9eae; border-left: 0; background: #a6b2c9; }
.tabs .on {
	height: 27px;
	margin-bottom: -1px;
	border-left: 1px solid #8f9eae;
	border-bottom: 0;
	background: #d6dbe8;
	position: relative;
}
.box { flex: 1; padding: 15px 13px 13px 17px; margin-bottom: -1px; border: 1px solid #8f9eae; }
.box .list { gap: 4px; }
.box .filters label { padding-right: 1px; }
.box .sq, .box .wide { height: 22px; }
.box .sq { width: 22px; }
.box .find { width: 104px; }
.box .find + .wide { margin: 0 3px 0 1px; }
```
